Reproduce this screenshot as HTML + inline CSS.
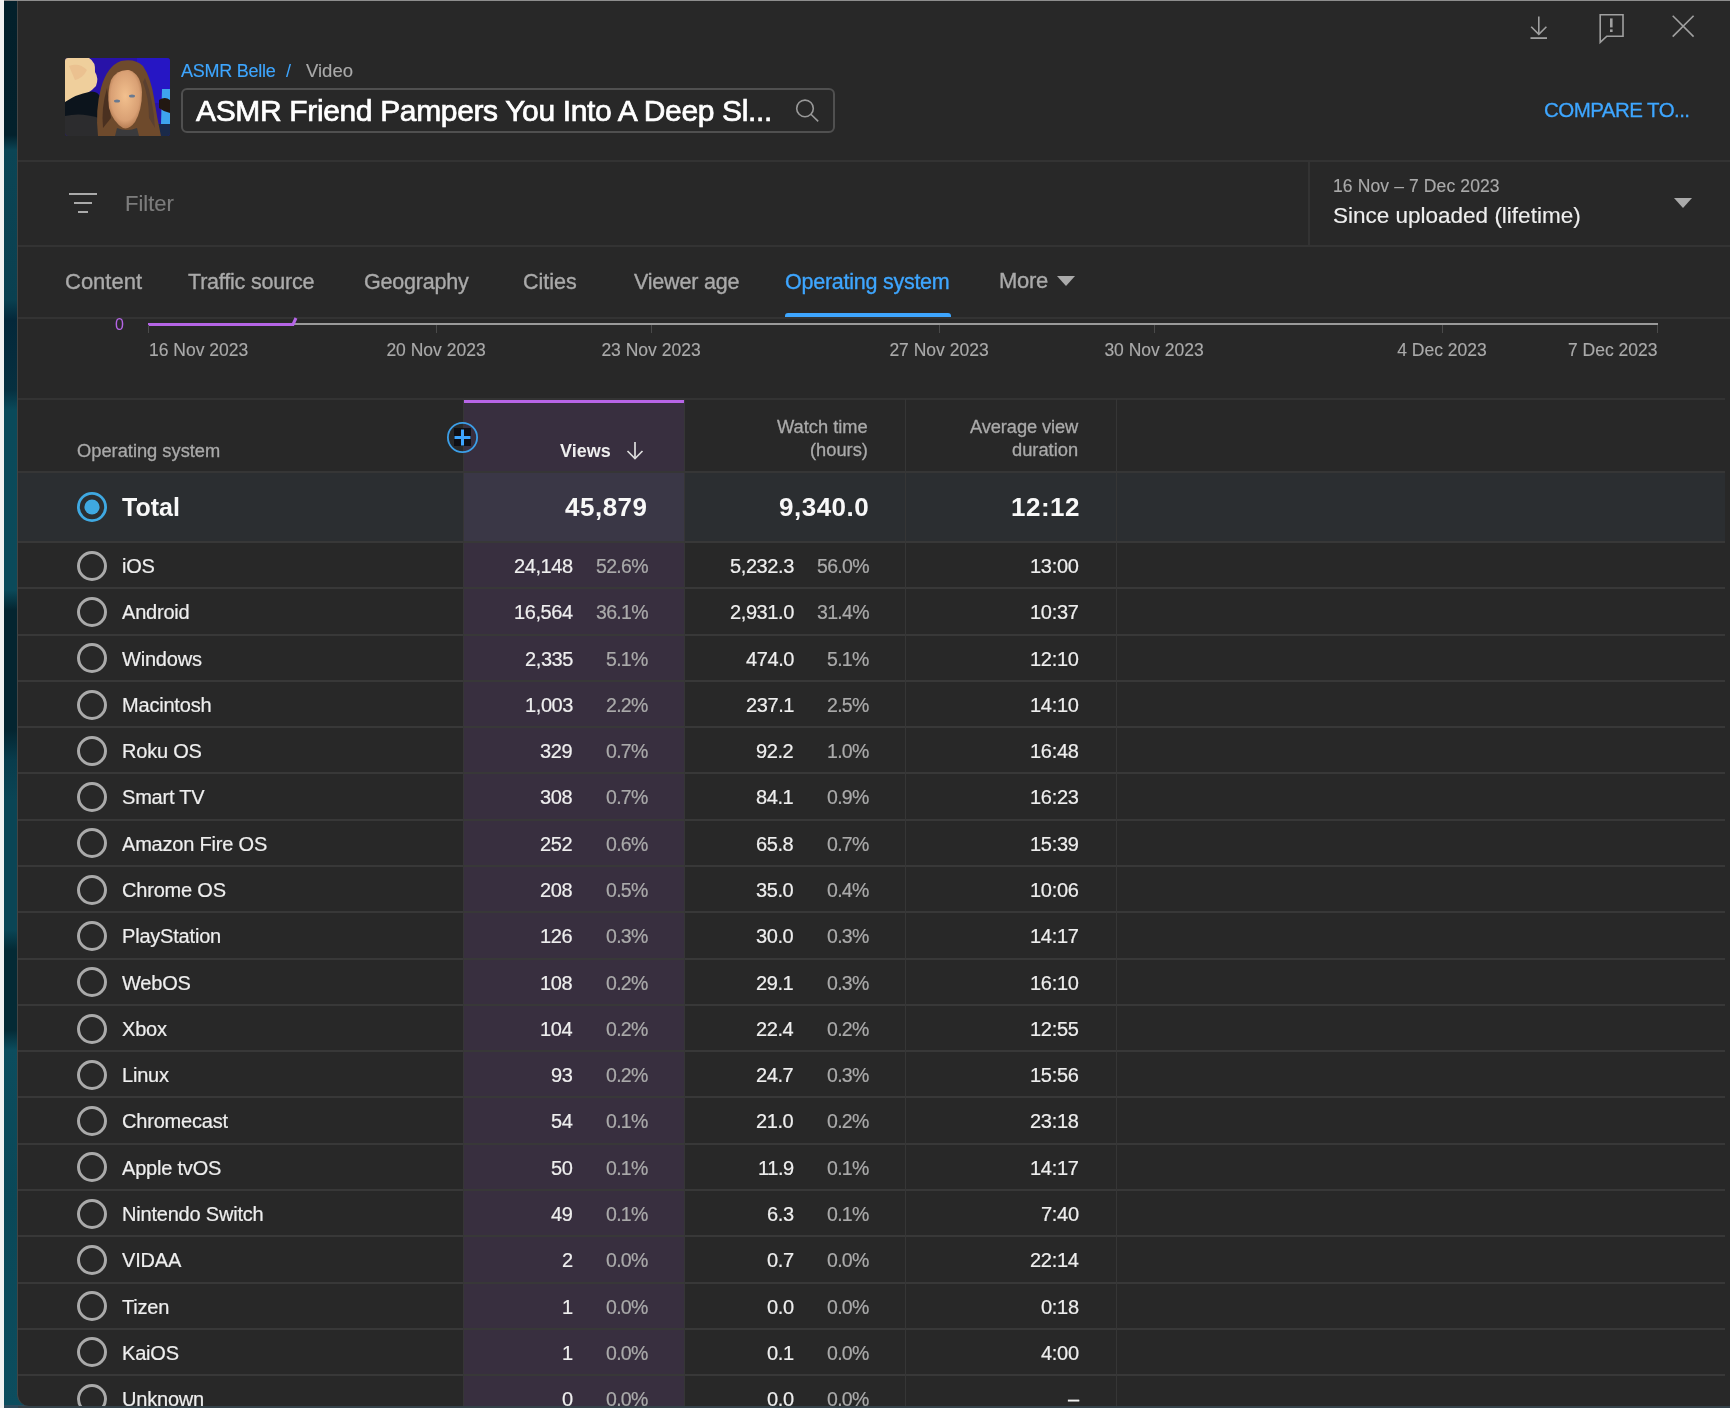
<!DOCTYPE html>
<html><head><meta charset="utf-8"><style>
html,body{margin:0;padding:0;}
body{width:1730px;height:1408px;overflow:hidden;position:relative;background:#f2f2f2;font-family:"Liberation Sans",sans-serif;}
.t{position:absolute;white-space:nowrap;will-change:transform;}
.r{position:absolute;}
svg{position:absolute;}
</style></head><body>
<div class="r" style="left:4px;top:0px;width:30px;height:1408px;background:linear-gradient(180deg,#03202b 0px,#03212c 135px,#0b4555 150px,#0a4050 300px,#04283a 320px,#063040 390px,#0a4a5a 410px,#0b4a5a 590px,#042530 610px,#042530 730px,#083c4c 760px,#0a4555 800px,#0a4555 930px,#042a35 950px,#042a35 1030px,#0c4d5e 1050px,#0a4858 1200px,#0c4d5e 1408px);"></div>
<div class="r" style="left:4px;top:1405px;width:1726px;height:3px;background:#2c4a5c;"></div>
<div class="r" style="left:17px;top:1px;width:1713px;height:1405px;background:#282828;border-left:1.5px solid #444;border-bottom-left-radius:12px;box-sizing:border-box;"></div>
<div class="r" style="left:4px;top:0px;width:1726px;height:1px;background:#8e8e8e;"></div>
<svg style="left:65px;top:58px" width="105" height="78" viewBox="0 0 105 78">
<defs><clipPath id="cp"><rect width="105" height="78" rx="3"/></clipPath>
<radialGradient id="fg" cx="0.5" cy="0.45" r="0.6"><stop offset="0" stop-color="#f2c08e"/><stop offset="0.7" stop-color="#d9a074"/><stop offset="1" stop-color="#a87048"/></radialGradient></defs>
<g clip-path="url(#cp)">
<rect width="105" height="78" fill="#2812a8"/>
<rect x="72" y="0" width="33" height="45" fill="#2616c4"/>
<path d="M0 0 H24 Q31 4 30 14 Q34 20 31 28 Q24 36 14 38 Q6 42 0 46 Z" fill="#efcf9c"/>
<path d="M4 8 Q14 4 22 12 Q18 20 10 22 Z" fill="#e8b888" opacity="0.6"/>
<path d="M0 44 Q12 36 24 34 Q32 32 36 40 L36 62 H0 Z" fill="#0c141c"/>
<path d="M0 58 Q16 54 34 60 L36 78 H0 Z" fill="#2c2c2e"/>
<path d="M97 31 H105 V66 H96 Z" fill="#3ea4ee"/>
<path d="M94 42 Q100 38 105 42 V55 Q99 54 94 50 Z" fill="#221812"/>
<path d="M88 66 H105 V78 H90 Z" fill="#1a2a4a"/>
<path d="M33 78 Q30 52 36 30 Q42 8 56 3 Q70 0 78 8 Q86 20 89 40 Q92 60 96 78 Z" fill="#6e4a2c"/>
<path d="M38 70 Q36 50 42 30 L46 60 Z" fill="#4a3020"/>
<path d="M80 20 Q88 40 90 70 L84 60 Q84 40 78 24 Z" fill="#5a4030"/>
<path d="M46 22 Q52 11 64 12 Q76 16 77 34 Q77 52 70 64 Q64 72 58 70 Q48 64 44 50 Q42 34 46 22 Z" fill="url(#fg)"/>
<ellipse cx="52" cy="43" rx="3" ry="1.5" fill="#6a7a90"/>
<ellipse cx="67" cy="38" rx="3" ry="1.5" fill="#6a7a90"/>
<path d="M52 70 Q62 74 72 70 L74 78 H50 Z" fill="#3a3a3c"/>
</g></svg>
<div class="t" style="top:62px;font-size:18px;line-height:18px;color:#3ea6ff;letter-spacing:-0.25px;-webkit-text-stroke:0.15px #3ea6ff;left:181px;">ASMR Belle</div>
<div class="t" style="top:62px;font-size:18px;line-height:18px;color:#3ea6ff;left:286px;">/</div>
<div class="t" style="top:62px;font-size:18.5px;line-height:18.5px;color:#aaaaaa;-webkit-text-stroke:0.15px #aaaaaa;left:306px;">Video</div>
<div class="r" style="left:181px;top:88px;width:654px;height:45px;background:transparent;border:2px solid #505050;border-radius:6px;box-sizing:border-box;"></div>
<div class="t" style="top:96px;font-size:30px;line-height:30px;color:#ffffff;letter-spacing:-0.35px;-webkit-text-stroke:0.7px #ffffff;left:196px;">ASMR Friend Pampers You Into A Deep Sl...</div>
<svg style="left:790px;top:94px" width="36" height="36" viewBox="0 0 36 36"><circle cx="15" cy="14.4" r="8.3" fill="none" stroke="#999999" stroke-width="1.6"/><line x1="20.9" y1="20.3" x2="28.2" y2="27.4" stroke="#999999" stroke-width="1.6"/></svg>
<svg style="left:1520px;top:8px" width="40" height="40" viewBox="0 0 40 40">
<line x1="18.8" y1="8.5" x2="18.8" y2="26.3" stroke="#a0a0a0" stroke-width="1.6"/>
<polyline points="11.2,18.8 18.8,26.3 26.4,18.8" fill="none" stroke="#a0a0a0" stroke-width="1.6"/>
<line x1="10.5" y1="30.1" x2="27" y2="30.1" stroke="#a0a0a0" stroke-width="1.8"/>
</svg>
<svg style="left:1592px;top:8px" width="40" height="40" viewBox="0 0 40 40">
<path d="M8.2 6.8 H31 V28.2 H14.8 L8.2 34.4 Z" fill="none" stroke="#a0a0a0" stroke-width="1.6" stroke-linejoin="miter"/>
<rect x="18" y="10.4" width="2.6" height="9" fill="#a0a0a0"/>
<rect x="18" y="21.4" width="2.6" height="2.6" fill="#a0a0a0"/>
</svg>
<svg style="left:1663px;top:6px" width="40" height="40" viewBox="0 0 40 40">
<line x1="9.7" y1="9.7" x2="30.6" y2="30.6" stroke="#a0a0a0" stroke-width="1.6"/>
<line x1="30.6" y1="9.7" x2="9.7" y2="30.6" stroke="#a0a0a0" stroke-width="1.6"/>
</svg>
<div class="t" style="top:100px;font-size:20.5px;line-height:20.5px;color:#3ea6ff;letter-spacing:-0.55px;-webkit-text-stroke:0.3px #3ea6ff;left:1544px;">COMPARE TO...</div>
<div class="r" style="left:18px;top:160px;width:1712px;height:2px;background:#333333;"></div>
<div class="r" style="left:18px;top:245px;width:1712px;height:2px;background:#333333;"></div>
<div class="r" style="left:1308px;top:161px;width:2px;height:85px;background:#333333;"></div>
<div class="r" style="left:69px;top:193px;width:28px;height:2px;background:#aaaaaa;"></div>
<div class="r" style="left:74px;top:202px;width:18px;height:2px;background:#aaaaaa;"></div>
<div class="r" style="left:78px;top:211px;width:10px;height:2px;background:#aaaaaa;"></div>
<div class="t" style="top:193px;font-size:22px;line-height:22px;color:#7c7c7c;-webkit-text-stroke:0.15px #7c7c7c;left:125px;">Filter</div>
<div class="t" style="top:178px;font-size:17.5px;line-height:17.5px;color:#aaaaaa;letter-spacing:0.12px;-webkit-text-stroke:0.15px #aaaaaa;left:1333px;">16 Nov – 7 Dec 2023</div>
<div class="t" style="top:205px;font-size:22.5px;line-height:22.5px;color:#eeeeee;-webkit-text-stroke:0.15px #eeeeee;left:1333px;">Since uploaded (lifetime)</div>
<svg style="left:1672px;top:196px" width="22" height="14" viewBox="0 0 22 14"><path d="M2 2 H20 L11 12 Z" fill="#aaaaaa"/></svg>
<div class="t" style="top:271px;font-size:22px;line-height:22px;color:#aaaaaa;-webkit-text-stroke:0.35px #aaaaaa;left:65px;">Content</div>
<div class="t" style="top:272px;font-size:21.5px;line-height:21.5px;color:#aaaaaa;letter-spacing:-0.2px;-webkit-text-stroke:0.35px #aaaaaa;left:188px;">Traffic source</div>
<div class="t" style="top:272px;font-size:21.5px;line-height:21.5px;color:#aaaaaa;letter-spacing:-0.2px;-webkit-text-stroke:0.35px #aaaaaa;left:363.5px;">Geography</div>
<div class="t" style="top:272px;font-size:21.5px;line-height:21.5px;color:#aaaaaa;-webkit-text-stroke:0.35px #aaaaaa;left:523px;">Cities</div>
<div class="t" style="top:272px;font-size:21.5px;line-height:21.5px;color:#aaaaaa;letter-spacing:-0.2px;-webkit-text-stroke:0.35px #aaaaaa;left:634px;">Viewer age</div>
<div class="t" style="top:272px;font-size:21.5px;line-height:21.5px;color:#3ea6ff;letter-spacing:-0.25px;-webkit-text-stroke:0.35px #3ea6ff;left:784.5px;">Operating system</div>
<div class="t" style="top:270px;font-size:22px;line-height:22px;color:#aaaaaa;letter-spacing:-0.3px;-webkit-text-stroke:0.35px #aaaaaa;left:999px;">More</div>
<svg style="left:1055px;top:274px" width="22" height="14" viewBox="0 0 22 14"><path d="M2 2 H20 L11 12 Z" fill="#aaaaaa"/></svg>
<div class="r" style="left:785px;top:312.5px;width:166px;height:4.5px;background:#3ea6ff;border-radius:3px 3px 0 0;"></div>
<div class="r" style="left:18px;top:317px;width:1712px;height:2px;background:#333333;"></div>
<div class="t" style="top:317px;font-size:16px;line-height:16px;color:#b565e6;left:115px;">0</div>
<div class="r" style="left:148px;top:323.3px;width:1510px;height:1.6px;background:#9a9a9a;"></div>
<svg style="left:140px;top:312px" width="170" height="20" viewBox="0 0 170 20"><polyline points="8,12.5 153,12.5 156,6" fill="none" stroke="#b565e6" stroke-width="3"/></svg>
<div class="r" style="left:147.5px;top:325px;width:1.2px;height:8px;background:#4a4a4a;"></div>
<div class="r" style="left:435.5px;top:325px;width:1.2px;height:8px;background:#4a4a4a;"></div>
<div class="r" style="left:651.0px;top:325px;width:1.2px;height:8px;background:#4a4a4a;"></div>
<div class="r" style="left:938.5px;top:325px;width:1.2px;height:8px;background:#4a4a4a;"></div>
<div class="r" style="left:1154.0px;top:325px;width:1.2px;height:8px;background:#4a4a4a;"></div>
<div class="r" style="left:1441.5px;top:325px;width:1.2px;height:8px;background:#4a4a4a;"></div>
<div class="r" style="left:1656.5px;top:325px;width:1.2px;height:8px;background:#4a4a4a;"></div>
<div class="t" style="top:342px;font-size:17.5px;line-height:17.5px;color:#aaaaaa;-webkit-text-stroke:0.15px #aaaaaa;left:149px;">16 Nov 2023</div>
<div class="t" style="top:342px;font-size:17.5px;line-height:17.5px;color:#aaaaaa;-webkit-text-stroke:0.15px #aaaaaa;left:136px;width:600px;text-align:center;">20 Nov 2023</div>
<div class="t" style="top:342px;font-size:17.5px;line-height:17.5px;color:#aaaaaa;-webkit-text-stroke:0.15px #aaaaaa;left:351px;width:600px;text-align:center;">23 Nov 2023</div>
<div class="t" style="top:342px;font-size:17.5px;line-height:17.5px;color:#aaaaaa;-webkit-text-stroke:0.15px #aaaaaa;left:639px;width:600px;text-align:center;">27 Nov 2023</div>
<div class="t" style="top:342px;font-size:17.5px;line-height:17.5px;color:#aaaaaa;-webkit-text-stroke:0.15px #aaaaaa;left:854px;width:600px;text-align:center;">30 Nov 2023</div>
<div class="t" style="top:342px;font-size:17.5px;line-height:17.5px;color:#aaaaaa;-webkit-text-stroke:0.15px #aaaaaa;left:1142px;width:600px;text-align:center;">4 Dec 2023</div>
<div class="t" style="top:342px;font-size:17.5px;line-height:17.5px;color:#aaaaaa;-webkit-text-stroke:0.15px #aaaaaa;right:72px;text-align:right;">7 Dec 2023</div>
<div class="r" style="left:18px;top:398px;width:1707px;height:2px;background:#333333;"></div>
<div class="r" style="left:464px;top:400px;width:220px;height:1006px;background:#382f3f;"></div>
<div class="r" style="left:464px;top:400px;width:220px;height:3px;background:#b865e8;"></div>
<div class="r" style="left:18px;top:471.5px;width:446px;height:70.5px;background:#2b2e31;"></div>
<div class="r" style="left:464px;top:471.5px;width:220px;height:70.5px;background:#3a3746;"></div>
<div class="r" style="left:684px;top:471.5px;width:1041px;height:70.5px;background:#2b2e31;"></div>
<div class="r" style="left:18px;top:471px;width:1707px;height:2px;background:#363636;"></div>
<div class="r" style="left:18px;top:541px;width:1707px;height:2px;background:#383838;"></div>
<div class="r" style="left:18px;top:587px;width:1707px;height:2px;background:#383838;"></div>
<div class="r" style="left:18px;top:634px;width:1707px;height:2px;background:#383838;"></div>
<div class="r" style="left:18px;top:680px;width:1707px;height:2px;background:#383838;"></div>
<div class="r" style="left:18px;top:726px;width:1707px;height:2px;background:#383838;"></div>
<div class="r" style="left:18px;top:772px;width:1707px;height:2px;background:#383838;"></div>
<div class="r" style="left:18px;top:819px;width:1707px;height:2px;background:#383838;"></div>
<div class="r" style="left:18px;top:865px;width:1707px;height:2px;background:#383838;"></div>
<div class="r" style="left:18px;top:911px;width:1707px;height:2px;background:#383838;"></div>
<div class="r" style="left:18px;top:958px;width:1707px;height:2px;background:#383838;"></div>
<div class="r" style="left:18px;top:1004px;width:1707px;height:2px;background:#383838;"></div>
<div class="r" style="left:18px;top:1050px;width:1707px;height:2px;background:#383838;"></div>
<div class="r" style="left:18px;top:1096px;width:1707px;height:2px;background:#383838;"></div>
<div class="r" style="left:18px;top:1143px;width:1707px;height:2px;background:#383838;"></div>
<div class="r" style="left:18px;top:1189px;width:1707px;height:2px;background:#383838;"></div>
<div class="r" style="left:18px;top:1235px;width:1707px;height:2px;background:#383838;"></div>
<div class="r" style="left:18px;top:1282px;width:1707px;height:2px;background:#383838;"></div>
<div class="r" style="left:18px;top:1328px;width:1707px;height:2px;background:#383838;"></div>
<div class="r" style="left:18px;top:1374px;width:1707px;height:2px;background:#383838;"></div>
<div class="r" style="left:463px;top:399px;width:1.2px;height:1007px;background:#363636;"></div>
<div class="r" style="left:684px;top:399px;width:1.2px;height:1007px;background:#363636;"></div>
<div class="r" style="left:905px;top:399px;width:1.2px;height:1007px;background:#363636;"></div>
<div class="r" style="left:1116px;top:399px;width:1.2px;height:1007px;background:#363636;"></div>
<div class="t" style="top:442px;font-size:18.3px;line-height:18.3px;color:#aaaaaa;-webkit-text-stroke:0.3px #aaaaaa;left:77px;">Operating system</div>
<div class="t" style="top:442px;font-size:18px;line-height:18px;color:#eeeeee;font-weight:700;right:1119px;text-align:right;">Views</div>
<svg style="left:622px;top:438px" width="26" height="24" viewBox="0 0 26 24"><line x1="13" y1="4" x2="13" y2="20.5" stroke="#dddddd" stroke-width="1.7"/><polyline points="5.5,13 13,20.5 20.5,13" fill="none" stroke="#dddddd" stroke-width="1.7"/></svg>
<div class="t" style="top:418px;font-size:18.3px;line-height:18.3px;color:#aaaaaa;-webkit-text-stroke:0.3px #aaaaaa;right:862px;text-align:right;">Watch time</div>
<div class="t" style="top:441px;font-size:18.3px;line-height:18.3px;color:#aaaaaa;-webkit-text-stroke:0.3px #aaaaaa;right:862px;text-align:right;">(hours)</div>
<div class="t" style="top:418px;font-size:18.3px;line-height:18.3px;color:#aaaaaa;letter-spacing:-0.1px;-webkit-text-stroke:0.3px #aaaaaa;right:652.1px;text-align:right;">Average view</div>
<div class="t" style="top:441px;font-size:18.3px;line-height:18.3px;color:#aaaaaa;-webkit-text-stroke:0.3px #aaaaaa;right:652px;text-align:right;">duration</div>
<svg style="left:446px;top:421px" width="33" height="33" viewBox="0 0 33 33"><circle cx="16.5" cy="16.5" r="14.6" fill="none" stroke="#3c9fe8" stroke-width="1.8"/><rect x="8" y="7" width="17" height="18" fill="#0f0f14"/><rect x="8.5" y="15" width="16" height="3" fill="#3ea6ff"/><rect x="15" y="8.5" width="3" height="16" fill="#3ea6ff"/></svg>
<svg style="left:75px;top:490px" width="34" height="34" viewBox="0 0 34 34"><circle cx="17" cy="17" r="13.6" fill="none" stroke="#3fa9e2" stroke-width="2.8"/><circle cx="17" cy="17" r="7.6" fill="#3fa9e2"/></svg>
<div class="t" style="top:495px;font-size:25px;line-height:25px;color:#f8f8f8;font-weight:700;left:122px;">Total</div>
<div class="t" style="top:494px;font-size:26px;line-height:26px;color:#f8f8f8;font-weight:700;letter-spacing:0.5px;right:1082.5px;text-align:right;">45,879</div>
<div class="t" style="top:494px;font-size:26px;line-height:26px;color:#f8f8f8;font-weight:700;letter-spacing:0.5px;right:860.5px;text-align:right;">9,340.0</div>
<div class="t" style="top:494px;font-size:26px;line-height:26px;color:#f8f8f8;font-weight:700;letter-spacing:0.5px;right:650.5px;text-align:right;">12:12</div>
<svg style="left:75px;top:548.70px" width="34" height="34" viewBox="0 0 34 34"><circle cx="17" cy="17" r="13.5" fill="none" stroke="#aaaaaa" stroke-width="3"/></svg>
<div class="t" style="top:556px;font-size:20px;line-height:20px;color:#eeeeee;letter-spacing:-0.2px;-webkit-text-stroke:0.2px #eeeeee;left:122px;">iOS</div>
<div class="t" style="top:556px;font-size:20px;line-height:20px;color:#eeeeee;letter-spacing:-0.4px;-webkit-text-stroke:0.2px #eeeeee;right:1157.4px;text-align:right;">24,148</div>
<div class="t" style="top:557px;font-size:19.5px;line-height:19.5px;color:#aaaaaa;letter-spacing:-0.7px;-webkit-text-stroke:0.2px #aaaaaa;right:1082.7px;text-align:right;">52.6%</div>
<div class="t" style="top:556px;font-size:20px;line-height:20px;color:#eeeeee;letter-spacing:-0.4px;-webkit-text-stroke:0.2px #eeeeee;right:936.4px;text-align:right;">5,232.3</div>
<div class="t" style="top:557px;font-size:19.5px;line-height:19.5px;color:#aaaaaa;letter-spacing:-0.7px;-webkit-text-stroke:0.2px #aaaaaa;right:861.7px;text-align:right;">56.0%</div>
<div class="t" style="top:556px;font-size:20px;line-height:20px;color:#eeeeee;letter-spacing:-0.3px;-webkit-text-stroke:0.2px #eeeeee;right:651.3px;text-align:right;">13:00</div>
<svg style="left:75px;top:594.98px" width="34" height="34" viewBox="0 0 34 34"><circle cx="17" cy="17" r="13.5" fill="none" stroke="#aaaaaa" stroke-width="3"/></svg>
<div class="t" style="top:602px;font-size:20px;line-height:20px;color:#eeeeee;letter-spacing:-0.2px;-webkit-text-stroke:0.2px #eeeeee;left:122px;">Android</div>
<div class="t" style="top:602px;font-size:20px;line-height:20px;color:#eeeeee;letter-spacing:-0.4px;-webkit-text-stroke:0.2px #eeeeee;right:1157.4px;text-align:right;">16,564</div>
<div class="t" style="top:603px;font-size:19.5px;line-height:19.5px;color:#aaaaaa;letter-spacing:-0.7px;-webkit-text-stroke:0.2px #aaaaaa;right:1082.7px;text-align:right;">36.1%</div>
<div class="t" style="top:602px;font-size:20px;line-height:20px;color:#eeeeee;letter-spacing:-0.4px;-webkit-text-stroke:0.2px #eeeeee;right:936.4px;text-align:right;">2,931.0</div>
<div class="t" style="top:603px;font-size:19.5px;line-height:19.5px;color:#aaaaaa;letter-spacing:-0.7px;-webkit-text-stroke:0.2px #aaaaaa;right:861.7px;text-align:right;">31.4%</div>
<div class="t" style="top:602px;font-size:20px;line-height:20px;color:#eeeeee;letter-spacing:-0.3px;-webkit-text-stroke:0.2px #eeeeee;right:651.3px;text-align:right;">10:37</div>
<svg style="left:75px;top:641.26px" width="34" height="34" viewBox="0 0 34 34"><circle cx="17" cy="17" r="13.5" fill="none" stroke="#aaaaaa" stroke-width="3"/></svg>
<div class="t" style="top:649px;font-size:20px;line-height:20px;color:#eeeeee;letter-spacing:-0.2px;-webkit-text-stroke:0.2px #eeeeee;left:122px;">Windows</div>
<div class="t" style="top:649px;font-size:20px;line-height:20px;color:#eeeeee;letter-spacing:-0.4px;-webkit-text-stroke:0.2px #eeeeee;right:1157.4px;text-align:right;">2,335</div>
<div class="t" style="top:650px;font-size:19.5px;line-height:19.5px;color:#aaaaaa;letter-spacing:-0.7px;-webkit-text-stroke:0.2px #aaaaaa;right:1082.7px;text-align:right;">5.1%</div>
<div class="t" style="top:649px;font-size:20px;line-height:20px;color:#eeeeee;letter-spacing:-0.4px;-webkit-text-stroke:0.2px #eeeeee;right:936.4px;text-align:right;">474.0</div>
<div class="t" style="top:650px;font-size:19.5px;line-height:19.5px;color:#aaaaaa;letter-spacing:-0.7px;-webkit-text-stroke:0.2px #aaaaaa;right:861.7px;text-align:right;">5.1%</div>
<div class="t" style="top:649px;font-size:20px;line-height:20px;color:#eeeeee;letter-spacing:-0.3px;-webkit-text-stroke:0.2px #eeeeee;right:651.3px;text-align:right;">12:10</div>
<svg style="left:75px;top:687.54px" width="34" height="34" viewBox="0 0 34 34"><circle cx="17" cy="17" r="13.5" fill="none" stroke="#aaaaaa" stroke-width="3"/></svg>
<div class="t" style="top:695px;font-size:20px;line-height:20px;color:#eeeeee;letter-spacing:-0.2px;-webkit-text-stroke:0.2px #eeeeee;left:122px;">Macintosh</div>
<div class="t" style="top:695px;font-size:20px;line-height:20px;color:#eeeeee;letter-spacing:-0.4px;-webkit-text-stroke:0.2px #eeeeee;right:1157.4px;text-align:right;">1,003</div>
<div class="t" style="top:696px;font-size:19.5px;line-height:19.5px;color:#aaaaaa;letter-spacing:-0.7px;-webkit-text-stroke:0.2px #aaaaaa;right:1082.7px;text-align:right;">2.2%</div>
<div class="t" style="top:695px;font-size:20px;line-height:20px;color:#eeeeee;letter-spacing:-0.4px;-webkit-text-stroke:0.2px #eeeeee;right:936.4px;text-align:right;">237.1</div>
<div class="t" style="top:696px;font-size:19.5px;line-height:19.5px;color:#aaaaaa;letter-spacing:-0.7px;-webkit-text-stroke:0.2px #aaaaaa;right:861.7px;text-align:right;">2.5%</div>
<div class="t" style="top:695px;font-size:20px;line-height:20px;color:#eeeeee;letter-spacing:-0.3px;-webkit-text-stroke:0.2px #eeeeee;right:651.3px;text-align:right;">14:10</div>
<svg style="left:75px;top:733.82px" width="34" height="34" viewBox="0 0 34 34"><circle cx="17" cy="17" r="13.5" fill="none" stroke="#aaaaaa" stroke-width="3"/></svg>
<div class="t" style="top:741px;font-size:20px;line-height:20px;color:#eeeeee;letter-spacing:-0.2px;-webkit-text-stroke:0.2px #eeeeee;left:122px;">Roku OS</div>
<div class="t" style="top:741px;font-size:20px;line-height:20px;color:#eeeeee;letter-spacing:-0.4px;-webkit-text-stroke:0.2px #eeeeee;right:1157.4px;text-align:right;">329</div>
<div class="t" style="top:742px;font-size:19.5px;line-height:19.5px;color:#aaaaaa;letter-spacing:-0.7px;-webkit-text-stroke:0.2px #aaaaaa;right:1082.7px;text-align:right;">0.7%</div>
<div class="t" style="top:741px;font-size:20px;line-height:20px;color:#eeeeee;letter-spacing:-0.4px;-webkit-text-stroke:0.2px #eeeeee;right:936.4px;text-align:right;">92.2</div>
<div class="t" style="top:742px;font-size:19.5px;line-height:19.5px;color:#aaaaaa;letter-spacing:-0.7px;-webkit-text-stroke:0.2px #aaaaaa;right:861.7px;text-align:right;">1.0%</div>
<div class="t" style="top:741px;font-size:20px;line-height:20px;color:#eeeeee;letter-spacing:-0.3px;-webkit-text-stroke:0.2px #eeeeee;right:651.3px;text-align:right;">16:48</div>
<svg style="left:75px;top:780.10px" width="34" height="34" viewBox="0 0 34 34"><circle cx="17" cy="17" r="13.5" fill="none" stroke="#aaaaaa" stroke-width="3"/></svg>
<div class="t" style="top:787px;font-size:20px;line-height:20px;color:#eeeeee;letter-spacing:-0.2px;-webkit-text-stroke:0.2px #eeeeee;left:122px;">Smart TV</div>
<div class="t" style="top:787px;font-size:20px;line-height:20px;color:#eeeeee;letter-spacing:-0.4px;-webkit-text-stroke:0.2px #eeeeee;right:1157.4px;text-align:right;">308</div>
<div class="t" style="top:788px;font-size:19.5px;line-height:19.5px;color:#aaaaaa;letter-spacing:-0.7px;-webkit-text-stroke:0.2px #aaaaaa;right:1082.7px;text-align:right;">0.7%</div>
<div class="t" style="top:787px;font-size:20px;line-height:20px;color:#eeeeee;letter-spacing:-0.4px;-webkit-text-stroke:0.2px #eeeeee;right:936.4px;text-align:right;">84.1</div>
<div class="t" style="top:788px;font-size:19.5px;line-height:19.5px;color:#aaaaaa;letter-spacing:-0.7px;-webkit-text-stroke:0.2px #aaaaaa;right:861.7px;text-align:right;">0.9%</div>
<div class="t" style="top:787px;font-size:20px;line-height:20px;color:#eeeeee;letter-spacing:-0.3px;-webkit-text-stroke:0.2px #eeeeee;right:651.3px;text-align:right;">16:23</div>
<svg style="left:75px;top:826.38px" width="34" height="34" viewBox="0 0 34 34"><circle cx="17" cy="17" r="13.5" fill="none" stroke="#aaaaaa" stroke-width="3"/></svg>
<div class="t" style="top:834px;font-size:20px;line-height:20px;color:#eeeeee;letter-spacing:-0.2px;-webkit-text-stroke:0.2px #eeeeee;left:122px;">Amazon Fire OS</div>
<div class="t" style="top:834px;font-size:20px;line-height:20px;color:#eeeeee;letter-spacing:-0.4px;-webkit-text-stroke:0.2px #eeeeee;right:1157.4px;text-align:right;">252</div>
<div class="t" style="top:835px;font-size:19.5px;line-height:19.5px;color:#aaaaaa;letter-spacing:-0.7px;-webkit-text-stroke:0.2px #aaaaaa;right:1082.7px;text-align:right;">0.6%</div>
<div class="t" style="top:834px;font-size:20px;line-height:20px;color:#eeeeee;letter-spacing:-0.4px;-webkit-text-stroke:0.2px #eeeeee;right:936.4px;text-align:right;">65.8</div>
<div class="t" style="top:835px;font-size:19.5px;line-height:19.5px;color:#aaaaaa;letter-spacing:-0.7px;-webkit-text-stroke:0.2px #aaaaaa;right:861.7px;text-align:right;">0.7%</div>
<div class="t" style="top:834px;font-size:20px;line-height:20px;color:#eeeeee;letter-spacing:-0.3px;-webkit-text-stroke:0.2px #eeeeee;right:651.3px;text-align:right;">15:39</div>
<svg style="left:75px;top:872.66px" width="34" height="34" viewBox="0 0 34 34"><circle cx="17" cy="17" r="13.5" fill="none" stroke="#aaaaaa" stroke-width="3"/></svg>
<div class="t" style="top:880px;font-size:20px;line-height:20px;color:#eeeeee;letter-spacing:-0.2px;-webkit-text-stroke:0.2px #eeeeee;left:122px;">Chrome OS</div>
<div class="t" style="top:880px;font-size:20px;line-height:20px;color:#eeeeee;letter-spacing:-0.4px;-webkit-text-stroke:0.2px #eeeeee;right:1157.4px;text-align:right;">208</div>
<div class="t" style="top:881px;font-size:19.5px;line-height:19.5px;color:#aaaaaa;letter-spacing:-0.7px;-webkit-text-stroke:0.2px #aaaaaa;right:1082.7px;text-align:right;">0.5%</div>
<div class="t" style="top:880px;font-size:20px;line-height:20px;color:#eeeeee;letter-spacing:-0.4px;-webkit-text-stroke:0.2px #eeeeee;right:936.4px;text-align:right;">35.0</div>
<div class="t" style="top:881px;font-size:19.5px;line-height:19.5px;color:#aaaaaa;letter-spacing:-0.7px;-webkit-text-stroke:0.2px #aaaaaa;right:861.7px;text-align:right;">0.4%</div>
<div class="t" style="top:880px;font-size:20px;line-height:20px;color:#eeeeee;letter-spacing:-0.3px;-webkit-text-stroke:0.2px #eeeeee;right:651.3px;text-align:right;">10:06</div>
<svg style="left:75px;top:918.94px" width="34" height="34" viewBox="0 0 34 34"><circle cx="17" cy="17" r="13.5" fill="none" stroke="#aaaaaa" stroke-width="3"/></svg>
<div class="t" style="top:926px;font-size:20px;line-height:20px;color:#eeeeee;letter-spacing:-0.2px;-webkit-text-stroke:0.2px #eeeeee;left:122px;">PlayStation</div>
<div class="t" style="top:926px;font-size:20px;line-height:20px;color:#eeeeee;letter-spacing:-0.4px;-webkit-text-stroke:0.2px #eeeeee;right:1157.4px;text-align:right;">126</div>
<div class="t" style="top:927px;font-size:19.5px;line-height:19.5px;color:#aaaaaa;letter-spacing:-0.7px;-webkit-text-stroke:0.2px #aaaaaa;right:1082.7px;text-align:right;">0.3%</div>
<div class="t" style="top:926px;font-size:20px;line-height:20px;color:#eeeeee;letter-spacing:-0.4px;-webkit-text-stroke:0.2px #eeeeee;right:936.4px;text-align:right;">30.0</div>
<div class="t" style="top:927px;font-size:19.5px;line-height:19.5px;color:#aaaaaa;letter-spacing:-0.7px;-webkit-text-stroke:0.2px #aaaaaa;right:861.7px;text-align:right;">0.3%</div>
<div class="t" style="top:926px;font-size:20px;line-height:20px;color:#eeeeee;letter-spacing:-0.3px;-webkit-text-stroke:0.2px #eeeeee;right:651.3px;text-align:right;">14:17</div>
<svg style="left:75px;top:965.22px" width="34" height="34" viewBox="0 0 34 34"><circle cx="17" cy="17" r="13.5" fill="none" stroke="#aaaaaa" stroke-width="3"/></svg>
<div class="t" style="top:973px;font-size:20px;line-height:20px;color:#eeeeee;letter-spacing:-0.2px;-webkit-text-stroke:0.2px #eeeeee;left:122px;">WebOS</div>
<div class="t" style="top:973px;font-size:20px;line-height:20px;color:#eeeeee;letter-spacing:-0.4px;-webkit-text-stroke:0.2px #eeeeee;right:1157.4px;text-align:right;">108</div>
<div class="t" style="top:974px;font-size:19.5px;line-height:19.5px;color:#aaaaaa;letter-spacing:-0.7px;-webkit-text-stroke:0.2px #aaaaaa;right:1082.7px;text-align:right;">0.2%</div>
<div class="t" style="top:973px;font-size:20px;line-height:20px;color:#eeeeee;letter-spacing:-0.4px;-webkit-text-stroke:0.2px #eeeeee;right:936.4px;text-align:right;">29.1</div>
<div class="t" style="top:974px;font-size:19.5px;line-height:19.5px;color:#aaaaaa;letter-spacing:-0.7px;-webkit-text-stroke:0.2px #aaaaaa;right:861.7px;text-align:right;">0.3%</div>
<div class="t" style="top:973px;font-size:20px;line-height:20px;color:#eeeeee;letter-spacing:-0.3px;-webkit-text-stroke:0.2px #eeeeee;right:651.3px;text-align:right;">16:10</div>
<svg style="left:75px;top:1011.50px" width="34" height="34" viewBox="0 0 34 34"><circle cx="17" cy="17" r="13.5" fill="none" stroke="#aaaaaa" stroke-width="3"/></svg>
<div class="t" style="top:1019px;font-size:20px;line-height:20px;color:#eeeeee;letter-spacing:-0.2px;-webkit-text-stroke:0.2px #eeeeee;left:122px;">Xbox</div>
<div class="t" style="top:1019px;font-size:20px;line-height:20px;color:#eeeeee;letter-spacing:-0.4px;-webkit-text-stroke:0.2px #eeeeee;right:1157.4px;text-align:right;">104</div>
<div class="t" style="top:1020px;font-size:19.5px;line-height:19.5px;color:#aaaaaa;letter-spacing:-0.7px;-webkit-text-stroke:0.2px #aaaaaa;right:1082.7px;text-align:right;">0.2%</div>
<div class="t" style="top:1019px;font-size:20px;line-height:20px;color:#eeeeee;letter-spacing:-0.4px;-webkit-text-stroke:0.2px #eeeeee;right:936.4px;text-align:right;">22.4</div>
<div class="t" style="top:1020px;font-size:19.5px;line-height:19.5px;color:#aaaaaa;letter-spacing:-0.7px;-webkit-text-stroke:0.2px #aaaaaa;right:861.7px;text-align:right;">0.2%</div>
<div class="t" style="top:1019px;font-size:20px;line-height:20px;color:#eeeeee;letter-spacing:-0.3px;-webkit-text-stroke:0.2px #eeeeee;right:651.3px;text-align:right;">12:55</div>
<svg style="left:75px;top:1057.78px" width="34" height="34" viewBox="0 0 34 34"><circle cx="17" cy="17" r="13.5" fill="none" stroke="#aaaaaa" stroke-width="3"/></svg>
<div class="t" style="top:1065px;font-size:20px;line-height:20px;color:#eeeeee;letter-spacing:-0.2px;-webkit-text-stroke:0.2px #eeeeee;left:122px;">Linux</div>
<div class="t" style="top:1065px;font-size:20px;line-height:20px;color:#eeeeee;letter-spacing:-0.4px;-webkit-text-stroke:0.2px #eeeeee;right:1157.4px;text-align:right;">93</div>
<div class="t" style="top:1066px;font-size:19.5px;line-height:19.5px;color:#aaaaaa;letter-spacing:-0.7px;-webkit-text-stroke:0.2px #aaaaaa;right:1082.7px;text-align:right;">0.2%</div>
<div class="t" style="top:1065px;font-size:20px;line-height:20px;color:#eeeeee;letter-spacing:-0.4px;-webkit-text-stroke:0.2px #eeeeee;right:936.4px;text-align:right;">24.7</div>
<div class="t" style="top:1066px;font-size:19.5px;line-height:19.5px;color:#aaaaaa;letter-spacing:-0.7px;-webkit-text-stroke:0.2px #aaaaaa;right:861.7px;text-align:right;">0.3%</div>
<div class="t" style="top:1065px;font-size:20px;line-height:20px;color:#eeeeee;letter-spacing:-0.3px;-webkit-text-stroke:0.2px #eeeeee;right:651.3px;text-align:right;">15:56</div>
<svg style="left:75px;top:1104.06px" width="34" height="34" viewBox="0 0 34 34"><circle cx="17" cy="17" r="13.5" fill="none" stroke="#aaaaaa" stroke-width="3"/></svg>
<div class="t" style="top:1111px;font-size:20px;line-height:20px;color:#eeeeee;letter-spacing:-0.2px;-webkit-text-stroke:0.2px #eeeeee;left:122px;">Chromecast</div>
<div class="t" style="top:1111px;font-size:20px;line-height:20px;color:#eeeeee;letter-spacing:-0.4px;-webkit-text-stroke:0.2px #eeeeee;right:1157.4px;text-align:right;">54</div>
<div class="t" style="top:1112px;font-size:19.5px;line-height:19.5px;color:#aaaaaa;letter-spacing:-0.7px;-webkit-text-stroke:0.2px #aaaaaa;right:1082.7px;text-align:right;">0.1%</div>
<div class="t" style="top:1111px;font-size:20px;line-height:20px;color:#eeeeee;letter-spacing:-0.4px;-webkit-text-stroke:0.2px #eeeeee;right:936.4px;text-align:right;">21.0</div>
<div class="t" style="top:1112px;font-size:19.5px;line-height:19.5px;color:#aaaaaa;letter-spacing:-0.7px;-webkit-text-stroke:0.2px #aaaaaa;right:861.7px;text-align:right;">0.2%</div>
<div class="t" style="top:1111px;font-size:20px;line-height:20px;color:#eeeeee;letter-spacing:-0.3px;-webkit-text-stroke:0.2px #eeeeee;right:651.3px;text-align:right;">23:18</div>
<svg style="left:75px;top:1150.34px" width="34" height="34" viewBox="0 0 34 34"><circle cx="17" cy="17" r="13.5" fill="none" stroke="#aaaaaa" stroke-width="3"/></svg>
<div class="t" style="top:1158px;font-size:20px;line-height:20px;color:#eeeeee;letter-spacing:-0.2px;-webkit-text-stroke:0.2px #eeeeee;left:122px;">Apple tvOS</div>
<div class="t" style="top:1158px;font-size:20px;line-height:20px;color:#eeeeee;letter-spacing:-0.4px;-webkit-text-stroke:0.2px #eeeeee;right:1157.4px;text-align:right;">50</div>
<div class="t" style="top:1159px;font-size:19.5px;line-height:19.5px;color:#aaaaaa;letter-spacing:-0.7px;-webkit-text-stroke:0.2px #aaaaaa;right:1082.7px;text-align:right;">0.1%</div>
<div class="t" style="top:1158px;font-size:20px;line-height:20px;color:#eeeeee;letter-spacing:-0.4px;-webkit-text-stroke:0.2px #eeeeee;right:936.4px;text-align:right;">11.9</div>
<div class="t" style="top:1159px;font-size:19.5px;line-height:19.5px;color:#aaaaaa;letter-spacing:-0.7px;-webkit-text-stroke:0.2px #aaaaaa;right:861.7px;text-align:right;">0.1%</div>
<div class="t" style="top:1158px;font-size:20px;line-height:20px;color:#eeeeee;letter-spacing:-0.3px;-webkit-text-stroke:0.2px #eeeeee;right:651.3px;text-align:right;">14:17</div>
<svg style="left:75px;top:1196.62px" width="34" height="34" viewBox="0 0 34 34"><circle cx="17" cy="17" r="13.5" fill="none" stroke="#aaaaaa" stroke-width="3"/></svg>
<div class="t" style="top:1204px;font-size:20px;line-height:20px;color:#eeeeee;letter-spacing:-0.2px;-webkit-text-stroke:0.2px #eeeeee;left:122px;">Nintendo Switch</div>
<div class="t" style="top:1204px;font-size:20px;line-height:20px;color:#eeeeee;letter-spacing:-0.4px;-webkit-text-stroke:0.2px #eeeeee;right:1157.4px;text-align:right;">49</div>
<div class="t" style="top:1205px;font-size:19.5px;line-height:19.5px;color:#aaaaaa;letter-spacing:-0.7px;-webkit-text-stroke:0.2px #aaaaaa;right:1082.7px;text-align:right;">0.1%</div>
<div class="t" style="top:1204px;font-size:20px;line-height:20px;color:#eeeeee;letter-spacing:-0.4px;-webkit-text-stroke:0.2px #eeeeee;right:936.4px;text-align:right;">6.3</div>
<div class="t" style="top:1205px;font-size:19.5px;line-height:19.5px;color:#aaaaaa;letter-spacing:-0.7px;-webkit-text-stroke:0.2px #aaaaaa;right:861.7px;text-align:right;">0.1%</div>
<div class="t" style="top:1204px;font-size:20px;line-height:20px;color:#eeeeee;letter-spacing:-0.3px;-webkit-text-stroke:0.2px #eeeeee;right:651.3px;text-align:right;">7:40</div>
<svg style="left:75px;top:1242.90px" width="34" height="34" viewBox="0 0 34 34"><circle cx="17" cy="17" r="13.5" fill="none" stroke="#aaaaaa" stroke-width="3"/></svg>
<div class="t" style="top:1250px;font-size:20px;line-height:20px;color:#eeeeee;letter-spacing:-0.2px;-webkit-text-stroke:0.2px #eeeeee;left:122px;">VIDAA</div>
<div class="t" style="top:1250px;font-size:20px;line-height:20px;color:#eeeeee;letter-spacing:-0.4px;-webkit-text-stroke:0.2px #eeeeee;right:1157.4px;text-align:right;">2</div>
<div class="t" style="top:1251px;font-size:19.5px;line-height:19.5px;color:#aaaaaa;letter-spacing:-0.7px;-webkit-text-stroke:0.2px #aaaaaa;right:1082.7px;text-align:right;">0.0%</div>
<div class="t" style="top:1250px;font-size:20px;line-height:20px;color:#eeeeee;letter-spacing:-0.4px;-webkit-text-stroke:0.2px #eeeeee;right:936.4px;text-align:right;">0.7</div>
<div class="t" style="top:1251px;font-size:19.5px;line-height:19.5px;color:#aaaaaa;letter-spacing:-0.7px;-webkit-text-stroke:0.2px #aaaaaa;right:861.7px;text-align:right;">0.0%</div>
<div class="t" style="top:1250px;font-size:20px;line-height:20px;color:#eeeeee;letter-spacing:-0.3px;-webkit-text-stroke:0.2px #eeeeee;right:651.3px;text-align:right;">22:14</div>
<svg style="left:75px;top:1289.18px" width="34" height="34" viewBox="0 0 34 34"><circle cx="17" cy="17" r="13.5" fill="none" stroke="#aaaaaa" stroke-width="3"/></svg>
<div class="t" style="top:1297px;font-size:20px;line-height:20px;color:#eeeeee;letter-spacing:-0.2px;-webkit-text-stroke:0.2px #eeeeee;left:122px;">Tizen</div>
<div class="t" style="top:1297px;font-size:20px;line-height:20px;color:#eeeeee;letter-spacing:-0.4px;-webkit-text-stroke:0.2px #eeeeee;right:1157.4px;text-align:right;">1</div>
<div class="t" style="top:1298px;font-size:19.5px;line-height:19.5px;color:#aaaaaa;letter-spacing:-0.7px;-webkit-text-stroke:0.2px #aaaaaa;right:1082.7px;text-align:right;">0.0%</div>
<div class="t" style="top:1297px;font-size:20px;line-height:20px;color:#eeeeee;letter-spacing:-0.4px;-webkit-text-stroke:0.2px #eeeeee;right:936.4px;text-align:right;">0.0</div>
<div class="t" style="top:1298px;font-size:19.5px;line-height:19.5px;color:#aaaaaa;letter-spacing:-0.7px;-webkit-text-stroke:0.2px #aaaaaa;right:861.7px;text-align:right;">0.0%</div>
<div class="t" style="top:1297px;font-size:20px;line-height:20px;color:#eeeeee;letter-spacing:-0.3px;-webkit-text-stroke:0.2px #eeeeee;right:651.3px;text-align:right;">0:18</div>
<svg style="left:75px;top:1335.46px" width="34" height="34" viewBox="0 0 34 34"><circle cx="17" cy="17" r="13.5" fill="none" stroke="#aaaaaa" stroke-width="3"/></svg>
<div class="t" style="top:1343px;font-size:20px;line-height:20px;color:#eeeeee;letter-spacing:-0.2px;-webkit-text-stroke:0.2px #eeeeee;left:122px;">KaiOS</div>
<div class="t" style="top:1343px;font-size:20px;line-height:20px;color:#eeeeee;letter-spacing:-0.4px;-webkit-text-stroke:0.2px #eeeeee;right:1157.4px;text-align:right;">1</div>
<div class="t" style="top:1344px;font-size:19.5px;line-height:19.5px;color:#aaaaaa;letter-spacing:-0.7px;-webkit-text-stroke:0.2px #aaaaaa;right:1082.7px;text-align:right;">0.0%</div>
<div class="t" style="top:1343px;font-size:20px;line-height:20px;color:#eeeeee;letter-spacing:-0.4px;-webkit-text-stroke:0.2px #eeeeee;right:936.4px;text-align:right;">0.1</div>
<div class="t" style="top:1344px;font-size:19.5px;line-height:19.5px;color:#aaaaaa;letter-spacing:-0.7px;-webkit-text-stroke:0.2px #aaaaaa;right:861.7px;text-align:right;">0.0%</div>
<div class="t" style="top:1343px;font-size:20px;line-height:20px;color:#eeeeee;letter-spacing:-0.3px;-webkit-text-stroke:0.2px #eeeeee;right:651.3px;text-align:right;">4:00</div>
<svg style="left:75px;top:1381.74px" width="34" height="34" viewBox="0 0 34 34"><circle cx="17" cy="17" r="13.5" fill="none" stroke="#aaaaaa" stroke-width="3"/></svg>
<div class="t" style="top:1389px;font-size:20px;line-height:20px;color:#eeeeee;letter-spacing:-0.2px;-webkit-text-stroke:0.2px #eeeeee;left:122px;">Unknown</div>
<div class="t" style="top:1389px;font-size:20px;line-height:20px;color:#eeeeee;letter-spacing:-0.4px;-webkit-text-stroke:0.2px #eeeeee;right:1157.4px;text-align:right;">0</div>
<div class="t" style="top:1390px;font-size:19.5px;line-height:19.5px;color:#aaaaaa;letter-spacing:-0.7px;-webkit-text-stroke:0.2px #aaaaaa;right:1082.7px;text-align:right;">0.0%</div>
<div class="t" style="top:1389px;font-size:20px;line-height:20px;color:#eeeeee;letter-spacing:-0.4px;-webkit-text-stroke:0.2px #eeeeee;right:936.4px;text-align:right;">0.0</div>
<div class="t" style="top:1390px;font-size:19.5px;line-height:19.5px;color:#aaaaaa;letter-spacing:-0.7px;-webkit-text-stroke:0.2px #aaaaaa;right:861.7px;text-align:right;">0.0%</div>
<div class="t" style="top:1389px;font-size:20px;line-height:20px;color:#eeeeee;letter-spacing:-0.3px;-webkit-text-stroke:0.2px #eeeeee;right:651.3px;text-align:right;">–</div>
<div class="r" style="left:18px;top:1406px;width:1712px;height:2px;background:#34424a;"></div>
</body></html>
